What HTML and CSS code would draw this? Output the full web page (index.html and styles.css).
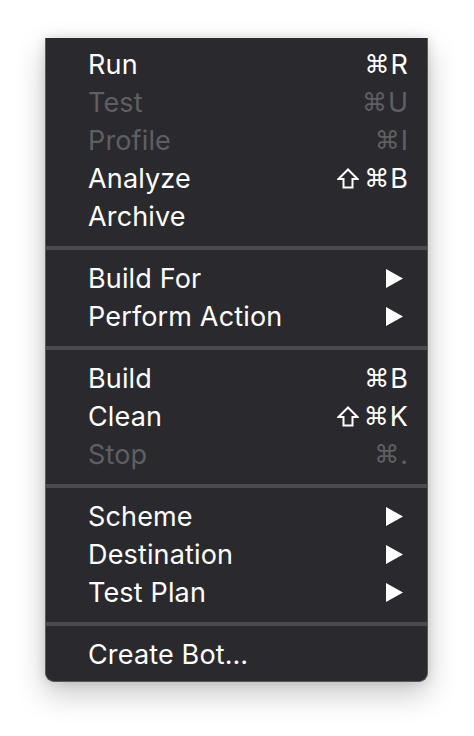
FILE: index.html
```html
<!DOCTYPE html>
<html>
<head>
<meta charset="utf-8">
<link rel="stylesheet" href="styles.css">
</head>
<body>
<div class="menu">
  <div class="item"><span class="label">Run</span><span class="key"><span class="cmd">⌘</span>R</span></div>
  <div class="item disabled"><span class="label">Test</span><span class="key"><span class="cmd">⌘</span>U</span></div>
  <div class="item disabled"><span class="label">Profile</span><span class="key"><span class="cmd">⌘</span>I</span></div>
  <div class="item"><span class="label">Analyze</span><span class="key"><svg class="shift" viewBox="0 0 22 21"><path d="M11 1.5 L20.5 11 L15.5 11 L15.5 19.5 L6.5 19.5 L6.5 11 L1.5 11 Z"/></svg><span class="cmd">⌘</span>B</span></div>
  <div class="item"><span class="label">Archive</span></div>
  <div class="sep"></div>
  <div class="item"><span class="label">Build For</span><svg class="arrow" viewBox="0 0 17 19"><polygon points="0,0 17,9.5 0,19"/></svg></div>
  <div class="item"><span class="label">Perform Action</span><svg class="arrow" viewBox="0 0 17 19"><polygon points="0,0 17,9.5 0,19"/></svg></div>
  <div class="sep"></div>
  <div class="item"><span class="label">Build</span><span class="key"><span class="cmd">⌘</span>B</span></div>
  <div class="item"><span class="label">Clean</span><span class="key"><svg class="shift" viewBox="0 0 22 21"><path d="M11 1.5 L20.5 11 L15.5 11 L15.5 19.5 L6.5 19.5 L6.5 11 L1.5 11 Z"/></svg><span class="cmd">⌘</span>K</span></div>
  <div class="item disabled"><span class="label">Stop</span><span class="key"><span class="cmd">⌘</span>.</span></div>
  <div class="sep"></div>
  <div class="item"><span class="label">Scheme</span><svg class="arrow" viewBox="0 0 17 19"><polygon points="0,0 17,9.5 0,19"/></svg></div>
  <div class="item"><span class="label">Destination</span><svg class="arrow" viewBox="0 0 17 19"><polygon points="0,0 17,9.5 0,19"/></svg></div>
  <div class="item"><span class="label">Test Plan</span><svg class="arrow" viewBox="0 0 17 19"><polygon points="0,0 17,9.5 0,19"/></svg></div>
  <div class="sep"></div>
  <div class="item"><span class="label">Create Bot…</span></div>
</div>
</body>
</html>
```
FILE: styles.css
```css
html, body {
  margin: 0;
  padding: 0;
  background: #ffffff;
}
body {
  width: 474px;
  height: 736px;
  overflow: hidden;
  font-family: "Inter", "Liberation Sans", sans-serif;
}
.menu {
  box-sizing: border-box;
  margin: 38px 0 0 45px;
  width: 383px;
  height: 644px;
  background: #2a2a2e;
  border: 1px solid #5a5a5d;
  border-top: none;
  border-radius: 0 0 9px 9px;
  padding: 7px 0 8px;
  box-shadow: 0 12px 30px rgba(0, 0, 0, 0.22), 0 0 12px rgba(0, 0, 0, 0.12);
  display: flex;
  flex-direction: column;
}
.item {
  height: 38px;
  display: flex;
  align-items: center;
  justify-content: space-between;
  padding: 1px 19px 0 42px;
  box-sizing: border-box;
  color: #ffffff;
  font-size: 27px;
  letter-spacing: 0.15px;
  line-height: 37px;
}
.item.disabled {
  color: #5f5f63;
}
.key {
  display: flex;
  align-items: center;
  letter-spacing: 0;
}
.cmd {
  font-family: "DejaVu Sans", sans-serif;
  font-size: 25px;
  margin-right: 1px;
}
.shift {
  width: 22px;
  height: 21px;
  fill: none;
  stroke: currentColor;
  stroke-width: 2;
  stroke-linejoin: miter;
  margin-right: 5px;
}
.arrow {
  width: 17px;
  height: 19px;
  fill: #ffffff;
  margin-right: 5px;
}
.sep {
  height: 4px;
  background: #4b4b4f;
  margin: 11px 0 9px;
}
```
